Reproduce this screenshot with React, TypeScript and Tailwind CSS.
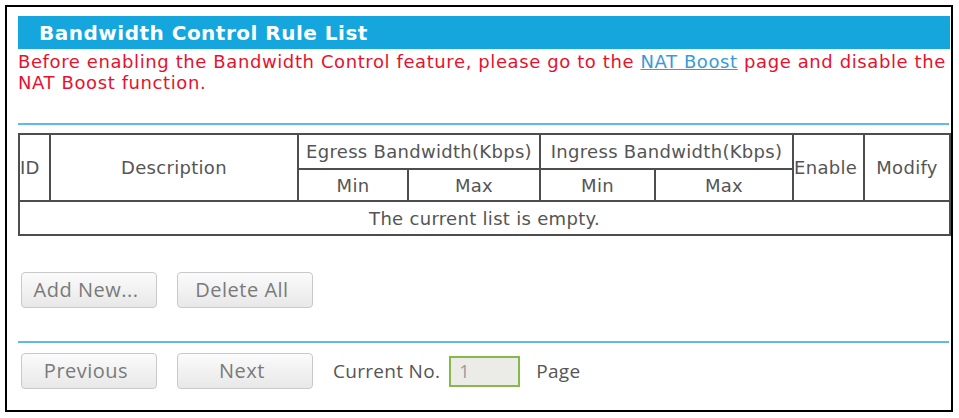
const verdana = { fontFamily: '"DejaVu Sans", Verdana, sans-serif' };

function Btn({ children }: { children: React.ReactNode }) {
  return (
    <button
      type="button"
      className="w-[136px] h-[36px] pr-[6px] rounded-[4px] border border-[#c9c9c9] bg-gradient-to-b from-[#fbfbfb] to-[#e8e8e8] text-[20px] tracking-[0.5px] text-[#7a7a7a] font-['Open_Sans',sans-serif] leading-none"
    >
      {children}
    </button>
  );
}

const th = "border-2 border-[#4d4d4d] font-normal text-center p-0";

export default function App() {
  return (
    <div className="bg-white w-[959px] h-[418px] pt-[5px] pl-[5px]">
      <div className="w-[948px] h-[407px] border-2 border-black pl-[11px] pt-[9px]">
        <div className="w-[932px]">
          {/* title bar */}
          <div className="h-[33px] bg-[#14a6dd] pl-[21px] flex items-center">
            <span className="text-white font-bold text-[20px] tracking-[0.5px]" style={verdana}>
              Bandwidth Control Rule List
            </span>
          </div>

          <p
            className="mt-[2px] text-[18px] tracking-[0.6px] leading-[21px] text-[#e8112d] whitespace-nowrap"
            style={verdana}
          >
            Before enabling the Bandwidth Control feature, please go to the{" "}
            <a href="#" className="text-[#3a9ad6] underline">NAT Boost</a> page and disable the
            <br />
            NAT Boost function.
          </p>

          <div className="mt-[30px] h-[2px] w-[931px] bg-[#5fb9ec]" />

          <table
            className="mt-[8px] w-[931px] table-fixed border-collapse text-[18px] tracking-[0.3px] text-[#555]"
            style={verdana}
          >
            <colgroup>
              <col className="w-[31px]" />
              <col className="w-[248px]" />
              <col className="w-[110px]" />
              <col className="w-[132px]" />
              <col className="w-[115px]" />
              <col className="w-[138px]" />
              <col className="w-[71px]" />
              <col className="w-[86px]" />
            </colgroup>
            <thead>
              <tr className="h-[35px]">
                <th rowSpan={2} className={th + " text-left"}>ID</th>
                <th rowSpan={2} className={th}>Description</th>
                <th colSpan={2} className={th + " whitespace-nowrap"}>Egress Bandwidth(Kbps)</th>
                <th colSpan={2} className={th + " whitespace-nowrap"}>Ingress Bandwidth(Kbps)</th>
                <th rowSpan={2} className={th + " text-left"}>Enable</th>
                <th rowSpan={2} className={th}>Modify</th>
              </tr>
              <tr className="h-[32px]">
                <th className={th}>Min</th>
                <th className={th}>Max</th>
                <th className={th}>Min</th>
                <th className={th}>Max</th>
              </tr>
            </thead>
            <tbody>
              <tr className="h-[34px]">
                <td colSpan={8} className={th}>The current list is empty.</td>
              </tr>
            </tbody>
          </table>

          <div className="mt-[36px] ml-[3px] flex gap-[20px]">
            <Btn>Add New...</Btn>
            <Btn>Delete All</Btn>
          </div>

          <div className="mt-[33px] h-[2px] w-[931px] bg-[#5fb9ec]" />

          <div className="mt-[10px] ml-[3px] flex items-center gap-[20px] font-['Open_Sans',sans-serif] text-[19px] tracking-[0.3px] text-[#555]">
            <Btn>Previous</Btn>
            <Btn>Next</Btn>
            <div className="flex items-center">
              <span>Current No.</span>
              <input
                readOnly
                value="1"
                className="ml-[9px] w-[71px] h-[31px] border-2 border-[#86b84a] bg-[#ebebe8] pl-[8px] text-[18px] text-[#999] outline-none"
              />
              <span className="ml-[16px]">Page</span>
            </div>
          </div>
        </div>
      </div>
    </div>
  );
}
